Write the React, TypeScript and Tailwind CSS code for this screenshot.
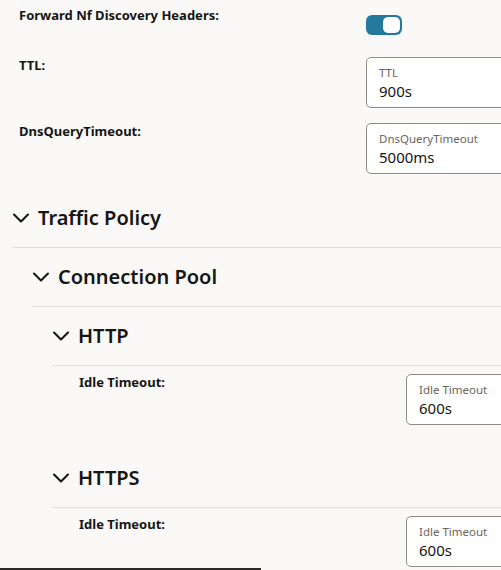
import React from 'react';
import { ChevronDown } from 'lucide-react';

const font = { fontFamily: '"Noto Sans", "Open Sans", Arial, sans-serif' };

const TextField: React.FC<{ label: string; value: string }> = ({ label, value }) => (
  <div className="flex h-[51px] w-[180px] shrink-0 flex-col rounded-[5px] border border-[#8f8b87] bg-white pl-[12px] pt-[7px]">
    <span className="text-[11.5px] leading-[16px] text-[#6b6560]">{label}</span>
    <span className="text-[15px] leading-[21px] text-[#161513]">{value}</span>
  </div>
);

const FormRow: React.FC<{ label: string; gap: string; children: React.ReactNode }> = ({ label, gap, children }) => (
  <div className="flex items-start">
    <div className={`${gap} shrink-0 text-[13px] font-bold leading-[18px] -mt-[1px] text-[#161513]`}>{label}</div>
    {children}
  </div>
);

const SectionHeader: React.FC<{ title: string }> = ({ title }) => (
  <div className="flex h-[59px] items-center border-b border-[#e2dfdc]">
    <ChevronDown size={28} strokeWidth={1.8} className="-ml-[5px] mr-[3px] shrink-0 text-[#161513]" />
    <span className="text-[20px] font-semibold text-[#161513]">{title}</span>
  </div>
);

export default function App() {
  return (
    <div className="relative h-[570px] w-[501px] overflow-hidden bg-[#faf9f8]" style={font}>
      <div className="flex flex-col pl-[19px] pt-[7px]">
        <FormRow label="Forward Nf Discovery Headers:" gap="w-[347px]">
          <div className="mt-[8px] flex h-[20px] w-[36px] items-center justify-end rounded-[6px] bg-[#227a9d] px-[2px]">
            <div className="h-[16px] w-[17px] rounded-[5px] bg-white" />
          </div>
        </FormRow>
        <div className="mt-[22px] flex flex-col gap-[15px]">
          <FormRow label="TTL:" gap="w-[347px]">
            <TextField label="TTL" value="900s" />
          </FormRow>
          <FormRow label="DnsQueryTimeout:" gap="w-[347px]">
            <TextField label="DnsQueryTimeout" value="5000ms" />
          </FormRow>
        </div>
      </div>

      <div className="mt-[15px] pl-[12px]">
        <SectionHeader title="Traffic Policy" />
        <div className="pl-[20px]">
          <SectionHeader title="Connection Pool" />
          <div className="pl-[20px]">
            <SectionHeader title="HTTP" />
            <div className="pl-[27px] pt-[8px] pb-[24px]">
              <FormRow label="Idle Timeout:" gap="w-[327px]">
                <TextField label="Idle Timeout" value="600s" />
              </FormRow>
            </div>
            <SectionHeader title="HTTPS" />
            <div className="pl-[27px] pt-[8px]">
              <FormRow label="Idle Timeout:" gap="w-[327px]">
                <TextField label="Idle Timeout" value="600s" />
              </FormRow>
            </div>
          </div>
        </div>
      </div>

      <div className="absolute bottom-0 left-0 h-[2px] w-[261px] bg-[#2b2a28]" />
    </div>
  );
}
